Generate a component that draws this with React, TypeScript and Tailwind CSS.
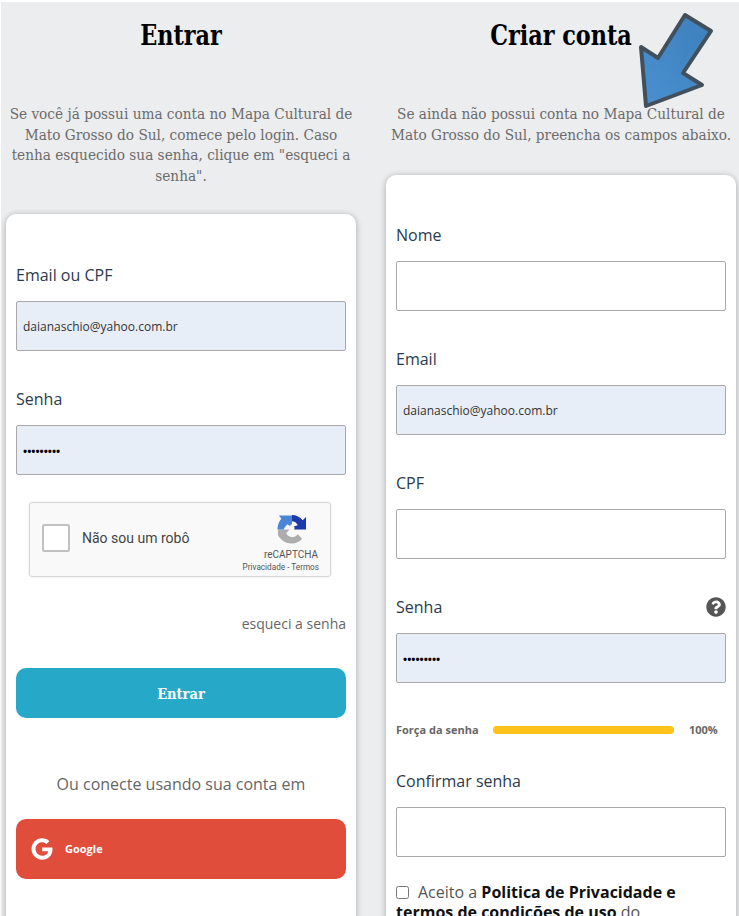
import { FaGoogle, FaQuestionCircle } from "react-icons/fa"

const slab = "font-['DejaVu_Serif_Condensed','DejaVu_Serif',serif]"

function Field({ label, value, password, help }: any) {
    return (
        <div className="mb-[36px]">
            <div className="flex items-center justify-between h-[24px] mb-[14px]">
                <label className="text-base leading-6 text-[#2b3b4d]">{label}</label>
                {help && <FaQuestionCircle size={20} className="text-[#555555]" />}
            </div>
            <input
                type={password ? "password" : "text"}
                defaultValue={value}
                className={`block w-full h-[50px] px-[6px] border border-[#a9a9a9] rounded-[2px] ${password ? "text-[11px] text-black font-bold" : "text-xs text-[#333333]"} ${value ? "bg-[#e8eef8]" : "bg-white"}`}
            />
        </div>
    )
}

function RecaptchaLogo() {
    return (
        <svg width="31" height="32" viewBox="0 0 64 64">
            <path fill="#adadad" d="M4 33H28L21 41C24 46 28 49 33 49C38 49 42 47 45 43L54 52C49 58 41 62 32 62C20 62 10 55 4 45Z" />
            <path fill="#4a85d6" d="M3 33C3 25 6 17 11 11L6 4H33V22C31 22 28 24 30 27L24 22C20 25 17 29 16 33Z" />
            <path fill="#1c3aa9" d="M33 3C42 3 50 7 55 14L62 7V33H37C40 31 38 27 36 27L45 24C42 19 38 16 33 16Z" />
        </svg>
    )
}

function Recaptcha() {
    return (
        <div className="flex justify-between w-[302px] h-[75px] ml-[13px] pl-[12px] pr-[11px] bg-[#f9f9f9] border border-[#d6d6d6] rounded-[3px] shadow-[0_0_3px_rgba(0,0,0,0.08)]">
            <div className="flex items-center mb-[3px]">
                <div className="w-[28px] h-[28px] bg-white border-2 border-[#c1c1c1] rounded-[2px]" />
                <span className="ml-[12px] text-sm text-[#444444] font-['Roboto',sans-serif]">Não sou um robô</span>
            </div>
            <div className="flex flex-col items-end pt-[10px] font-['Roboto',sans-serif] text-[#555555]">
                <div className="mr-[12px]">
                    <RecaptchaLogo />
                </div>
                <span className="text-[10px] leading-[12px] mt-[4px] mr-px">reCAPTCHA</span>
                <span className="text-[8.2px] leading-[10px] mt-px whitespace-nowrap">Privacidade - Termos</span>
            </div>
        </div>
    )
}

export default function App() {
    return (
        <div className="h-[916px] overflow-hidden bg-white pt-[2px] pl-px font-['Open_Sans',sans-serif]">
            <div className="relative h-full bg-[#ecedef] pl-[5px] flex gap-[30px]">
                {/* Login */}
                <div className="w-[350px] shrink-0">
                    <h1 className={`text-center text-[27px] leading-[36px] font-bold text-black mt-[16px] scale-x-[0.92] ${slab}`}>Entrar</h1>
                    <p className={`text-center text-[15.2px] leading-[20.5px] text-[#6b6b6b] mt-[50px] whitespace-nowrap ${slab}`}>
                        Se você já possui uma conta no Mapa Cultural de<br />
                        Mato Grosso do Sul, comece pelo login. Caso<br />
                        tenha esquecido sua senha, clique em "esqueci a<br />
                        senha".
                    </p>
                    <div className="mt-[28px] h-[800px] bg-white rounded-[10px] shadow-[0_1px_6px_rgba(0,0,0,0.3)] px-[10px] pt-[49px]">
                        <Field label="Email ou CPF" value="daianaschio@yahoo.com.br" />
                        <Field label="Senha" value="daiana123" password />
                        <div className="mt-[-9px]">
                            <Recaptcha />
                        </div>
                        <div className="text-right text-sm leading-5 text-[#666666] mt-[37px]">esqueci a senha</div>
                        <button className={`block w-full h-[50px] mt-[34px] pt-px rounded-[10px] bg-[#26a9c9] text-white text-[14.5px] font-bold ${slab}`}>Entrar</button>
                        <div className="text-center text-base leading-6 text-[#666666] mt-[54px]">Ou conecte usando sua conta em</div>
                        <button className="flex items-center w-full h-[60px] mt-[23px] rounded-[10px] bg-[#e04d3b] text-white pl-[15px]">
                            <FaGoogle size={22} />
                            <span className="ml-[12px] text-[11px] font-bold">Google</span>
                        </button>
                    </div>
                </div>

                {/* Cadastro */}
                <div className="w-[350px] shrink-0">
                    <h1 className={`text-center text-[27px] leading-[36px] font-bold text-black mt-[16px] scale-x-[0.92] ${slab}`}>Criar conta</h1>
                    <p className={`text-center text-[15.2px] leading-[20.5px] text-[#6b6b6b] mt-[50px] whitespace-nowrap ${slab}`}>
                        Se ainda não possui conta no Mapa Cultural de<br />
                        Mato Grosso do Sul, preencha os campos abaixo.
                    </p>
                    <div className="mt-[30px] h-[800px] bg-white rounded-[10px] shadow-[0_1px_6px_rgba(0,0,0,0.3)] px-[10px] pt-[48px]">
                        <Field label="Nome" />
                        <Field label="Email" value="daianaschio@yahoo.com.br" />
                        <Field label="CPF" />
                        <Field label="Senha" value="daiana123" password help />
                        <div className="flex items-center h-[16px] mt-[39px] text-[11px] font-bold text-[#666666]">
                            <span className="w-[97px] whitespace-nowrap">Força da senha</span>
                            <div className="w-[181px] h-[8px] rounded-full bg-[#ffc11a]" />
                            <span className="ml-[15px]">100%</span>
                        </div>
                        <div className="mt-[31px]">
                            <Field label="Confirmar senha" />
                        </div>
                        <div className="mt-[-11px] text-base leading-5 text-[#555555]">
                            <input type="checkbox" className="mr-[9px] align-[-1px]" />
                            Aceito a <b className="text-[#111111]">Politica de Privacidade e<br />termos de condições de uso</b> do
                        </div>
                    </div>
                </div>

                {/* seta desenhada por cima do print */}
                <svg className="absolute left-[-1px] top-[-2px] pointer-events-none" width="739" height="120">
                    <defs>
                        <linearGradient id="arrow" x1="0" y1="1" x2="1" y2="0">
                            <stop offset="0" stopColor="#4a90d0" />
                            <stop offset="1" stopColor="#3d7fbc" />
                        </linearGradient>
                    </defs>
                    <polygon
                        points="685,15 711,31 683,73 702,85 646,106 641,47 658,58"
                        fill="url(#arrow)"
                        stroke="#42505c"
                        strokeWidth="4"
                        strokeLinejoin="round"
                    />
                </svg>
            </div>
        </div>
    )
}
